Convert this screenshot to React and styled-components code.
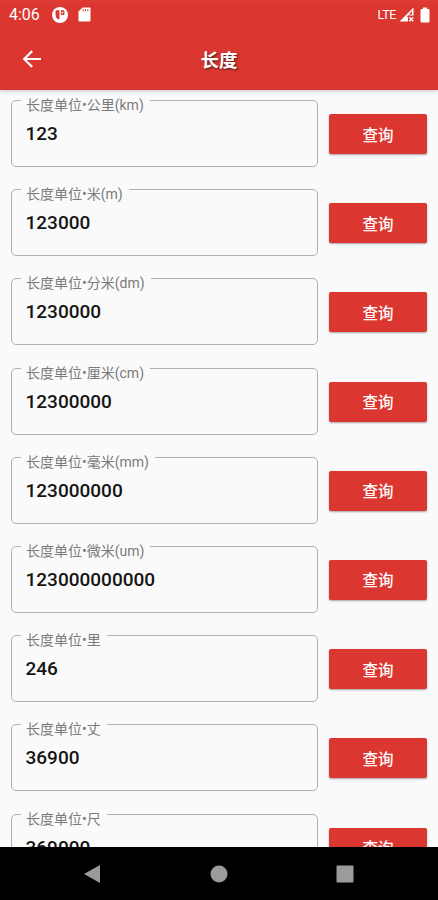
import React, { useState } from "react";
import styled, { createGlobalStyle } from "styled-components";

const GlobalStyle = createGlobalStyle`
  * {
    box-sizing: border-box;
  }
  body {
    margin: 0;
    background: #fafafa;
    font-family: Roboto, "Noto Sans CJK SC", sans-serif;
  }
`;

export const Screen = styled.div`
  display: flex;
  flex-direction: column;
  width: 438px;
  height: 900px;
  overflow: hidden;
  background: #fafafa;
`;

export const Header = styled.header`
  flex: none;
  height: 90px;
  color: #fff;
  background: linear-gradient(#e03c36, #db362f 6px);
  box-shadow: 0 1px 3px rgba(0, 0, 0, 0.22);
  z-index: 1;
`;

export const StatusBar = styled.div`
  display: flex;
  align-items: center;
  height: 29px;
  padding: 0 8px 0 9px;
`;

export const Clock = styled.span`
  width: 43px;
  font-size: 16px;
  line-height: 29px;
`;

export const StatusIcons = styled.div`
  display: flex;
  align-items: center;
  flex: 1;
  gap: 10px;
`;

export const Network = styled.div`
  display: flex;
  align-items: center;
`;

export const NetworkText = styled.span`
  font-size: 12.5px;
  letter-spacing: -0.4px;
  margin-right: 3px;
`;

export const TitleBar = styled.div`
  display: grid;
  grid-template-columns: 64px 1fr 64px;
  align-items: center;
  height: 61px;
`;

export const BackButton = styled.button`
  display: flex;
  padding: 0 0 2px 20px;
  border: 0;
  background: none;
  color: inherit;
`;

export const Title = styled.h1`
  margin: 0;
  padding-top: 2px;
  text-align: center;
  font-size: 18.5px;
  line-height: 24px;
  font-weight: 700;
  text-shadow: 1px 1px 2px rgba(0, 0, 0, 0.65);
`;

export const List = styled.main`
  flex: 1;
  min-height: 0;
  overflow: hidden;
  padding: 5px 11px 0;
`;

export const Row = styled.div`
  display: flex;
  gap: 11px;
  height: 89.2px;
`;

export const Field = styled.fieldset`
  flex: 1;
  min-width: 0;
  height: 72px;
  margin: 0;
  padding: 0 9px;
  border: 1px solid #b0b0b0;
  border-radius: 5px;
`;

/* short line box, so the label hangs a little under the border line */
export const Label = styled.legend`
  padding: 10px 6px 0 5px;
  font-size: 14px;
  line-height: 1px;
  color: #7a7a7a;
  white-space: nowrap;
`;

export const Input = styled.input`
  display: block;
  width: 100%;
  height: 24px;
  margin-top: 16px;
  padding: 0 4.5px;
  border: 0;
  outline: 0;
  background: none;
  color: #141414;
  font: 500 19px/24px Roboto, sans-serif;
`;

export const QueryButton = styled.button`
  flex: none;
  width: 98px;
  height: 40px;
  margin-top: 19px;
  padding: 3px 0 0;
  border: 0;
  border-radius: 2px;
  background: #db362f;
  box-shadow: 0 1px 2px rgba(0, 0, 0, 0.35);
  color: #fff;
  font: 500 15.5px/20px Roboto, "Noto Sans CJK SC", sans-serif;
`;

export const NavBar = styled.nav`
  display: flex;
  align-items: center;
  flex: none;
  height: 53px;
  padding: 0 84px 0 83px;
  justify-content: space-between;
  background: #000;
`;

const units = [
  { name: "公里(km)", value: "123" },
  { name: "米(m)", value: "123000" },
  { name: "分米(dm)", value: "1230000" },
  { name: "厘米(cm)", value: "12300000" },
  { name: "毫米(mm)", value: "123000000" },
  { name: "微米(um)", value: "123000000000" },
  { name: "里", value: "246" },
  { name: "丈", value: "36900" },
  { name: "尺", value: "369000" },
];

const App = () => {
  const [values, setValues] = useState(units.map((unit) => unit.value));

  const handleChange = (key, value) => {
    setValues(values.map((old, i) => (i === key ? value : old)));
  }

  return (
    <Screen>
      <GlobalStyle />
      <Header>
        <StatusBar>
          <Clock>4:06</Clock>
          <StatusIcons>
            <svg width="16" height="16" viewBox="0 0 16 16">
              <circle cx="8" cy="8" r="8" fill="#fff" />
              <path d="M7.4 3.2V12.6A4.8 4.8 0 0 1 3.6 8V3.9A0.8 0.8 0 0 1 4.4 3.2Z" fill="#db362f" />
              <path d="M8.8 3.2H11.4A1 1 0 0 1 12.4 4.2V7A1 1 0 0 1 11.4 8H8.8Z" fill="#db362f" />
              <circle cx="10.4" cy="5.6" r="0.9" fill="#fff" />
            </svg>
            <svg width="13" height="15" viewBox="0 0 13 15">
              <path d="M4.5 0.5H11.5A1 1 0 0 1 12.5 1.5V13.5A1 1 0 0 1 11.5 14.5H1.5A1 1 0 0 1 0.5 13.5V4.5Z" fill="#fff" />
              <path d="M5.2 2.2V4.2M7.5 2.2V4.2M9.8 2.2V4.2" stroke="#db362f" strokeWidth="1.1" />
            </svg>
          </StatusIcons>
          <Network>
            <NetworkText>LTE</NetworkText>
            <svg width="15" height="15" viewBox="0 0 15 15">
              <path d="M0.5 14.5L14.5 0.5V8.5H9V14.5Z" fill="#fff" />
              <path d="M7.4 9.8L13 4.2V7.4H9.4V9.8Z" fill="#db362f" />
              <path d="M10.3 10.3L14.2 14.2M14.2 10.3L10.3 14.2" stroke="#fff" strokeWidth="1.5" />
            </svg>
            <svg width="10" height="16" viewBox="0 0 10 16" style={{ marginLeft: 6 }}>
              <path d="M3 0.5H7V2H8.5A1 1 0 0 1 9.5 3V14.5A1 1 0 0 1 8.5 15.5H1.5A1 1 0 0 1 0.5 14.5V3A1 1 0 0 1 1.5 2H3Z" fill="#fff" />
            </svg>
          </Network>
        </StatusBar>
        <TitleBar>
          <BackButton>
            <svg width="24" height="24" viewBox="0 0 24 24">
              <path d="M21 12H4.2M12.2 4L4.2 12L12.2 20" fill="none" stroke="#fff" strokeWidth="2.2" />
            </svg>
          </BackButton>
          <Title>长度</Title>
        </TitleBar>
      </Header>
      <List>
        {
          units.map((unit, key) => (
            <Row key={key}>
              <Field>
                <Label>长度单位•{unit.name}</Label>
                <Input value={values[key]} onChange={(e) => handleChange(key, e.target.value)} />
              </Field>
              <QueryButton>查询</QueryButton>
            </Row>
          ))
        }
      </List>
      <NavBar>
        <svg width="18" height="20" viewBox="0 0 18 20">
          <path d="M1 10L17 1V19Z" fill="#9b9b9b" />
        </svg>
        <svg width="18" height="18" viewBox="0 0 18 18">
          <circle cx="9" cy="9" r="8.5" fill="#9b9b9b" />
        </svg>
        <svg width="18" height="18" viewBox="0 0 18 18">
          <rect x="0.5" y="0.5" width="17" height="17" rx="1" fill="#9b9b9b" />
        </svg>
      </NavBar>
    </Screen>
  );
}

export default App;
